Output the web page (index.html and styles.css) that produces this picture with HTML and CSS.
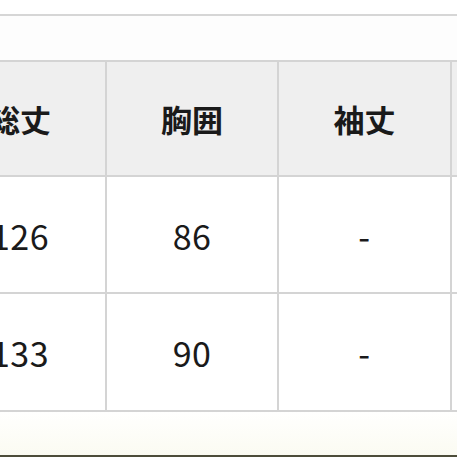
FILE: index.html
```html
<!DOCTYPE html>
<html lang="ja">
<head>
<meta charset="utf-8">
<link rel="stylesheet" href="styles.css">
</head>
<body>
<div class="page">
  <div class="top-rule"></div>
  <div class="spacer"></div>
  <div class="size-table">
    <div class="cell head">総丈</div>
    <div class="cell head">胸囲</div>
    <div class="cell head">袖丈</div>
    <div class="cell head"></div>
    <div class="cell row1">126</div>
    <div class="cell row1">86</div>
    <div class="cell row1">-</div>
    <div class="cell row1"></div>
    <div class="cell row2">133</div>
    <div class="cell row2">90</div>
    <div class="cell row2">-</div>
    <div class="cell row2"></div>
  </div>
  <div class="footer-space"></div>
  <div class="bottom-rule"></div>
</div>
</body>
</html>
```

FILE: styles.css
```css
html, body {
  margin: 0;
  padding: 0;
  width: 457px;
  height: 457px;
  overflow: hidden;
  background: #ffffff;
}
.page {
  display: flex;
  flex-direction: column;
  width: 457px;
  height: 457px;
  overflow: hidden;
  font-family: "Noto Sans CJK JP", "Noto Sans", sans-serif;
  color: #1a1a1a;
}
.top-rule {
  margin-top: 14px;
  height: 2px;
  background: #d6d6d6;
  flex: none;
}
.spacer {
  height: 44px;
  background: #fdfdfd;
  flex: none;
}
.size-table {
  flex: none;
  display: grid;
  grid-template-columns: 170px 170px 171px 171px;
  grid-template-rows: 113px 115px 116px;
  gap: 2px;
  padding: 2px;
  margin-left: -67px;
  width: max-content;
  background: #d4d4d4;
}
.cell {
  display: flex;
  align-items: center;
  justify-content: center;
  background: #ffffff;
}
.head {
  background: #efefef;
  font-weight: 700;
  font-size: 31px;
  padding-bottom: 1px;
}
.row1, .row2 {
  font-size: 34px;
  font-weight: 400;
  letter-spacing: 0.5px;
}
.row1 {
  padding-top: 2px;
}
.footer-space {
  flex: 1;
  background: linear-gradient(#fffffe, #fbfbf2);
}
.bottom-rule {
  height: 2px;
  background: #4d4d3a;
  flex: none;
}
```
